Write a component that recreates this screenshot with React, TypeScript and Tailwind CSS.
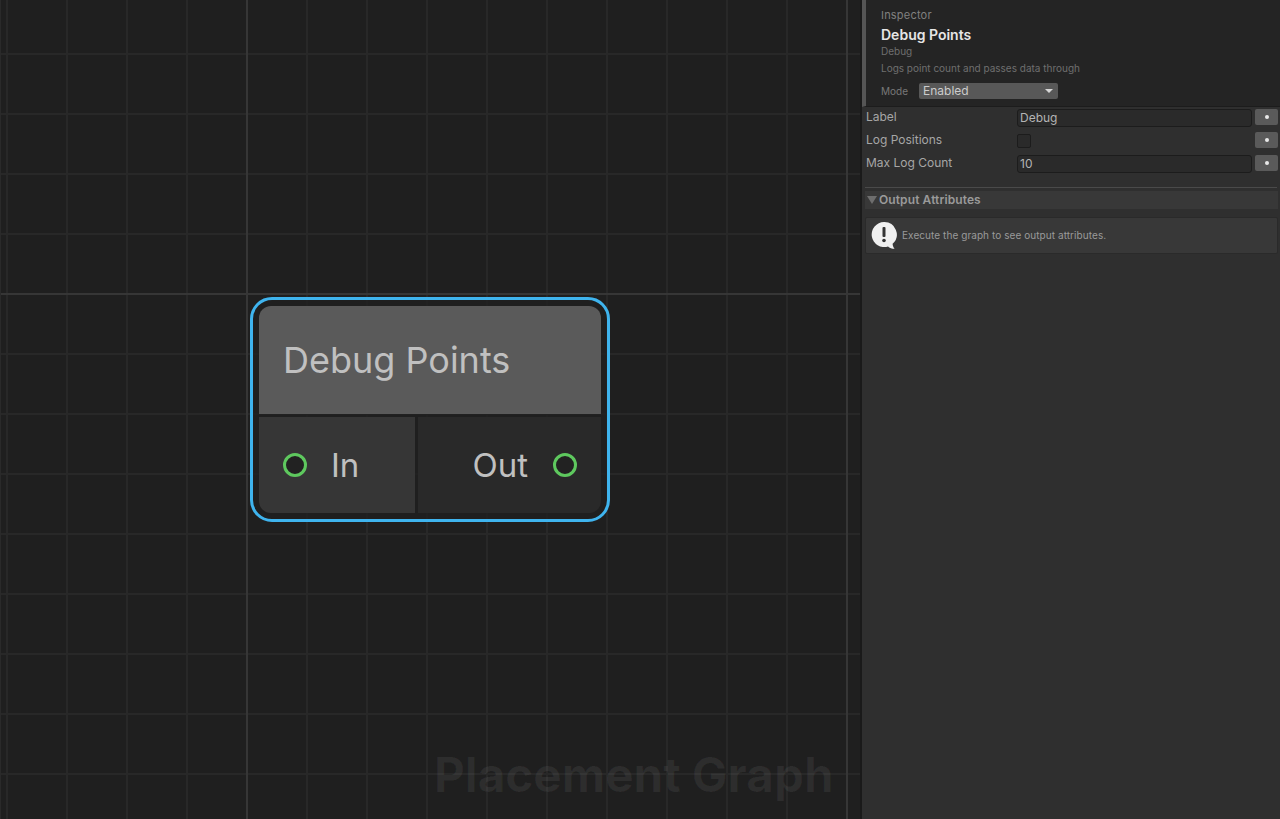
const font = { fontFamily: "Inter, 'Noto Sans', sans-serif" };

function Dot() {
  return (
    <button className="flex h-4 w-[23px] items-center justify-center rounded-[2px] bg-[#5a5a5a]">
      <span className="h-[4px] w-[4px] rounded-full bg-[#e8e8e8]" />
    </button>
  );
}

function Row({ label, children }: { label: string; children: React.ReactNode }) {
  return (
    <div className="flex h-[23px] items-center pl-1 pr-[2px]">
      <span className="w-[151px] pb-[2px] text-[12px] text-[#a6a6a6]">{label}</span>
      <div className="flex-1">{children}</div>
      <div className="ml-[3px] pb-px"><Dot /></div>
    </div>
  );
}

function Field({ value }: { value: string }) {
  return (
    <div className="flex h-[18px] w-[235px] items-center rounded-[3px] border border-[#1c1c1c] bg-[#2a2a2a] pl-[2px] text-[12px] text-[#b4b4b4]">
      {value}
    </div>
  );
}

function Port() {
  return <span className="h-6 w-6 shrink-0 rounded-full border-[3px] border-[#5ec85e] bg-[#222222]" />;
}

export default function App() {
  return (
    <div className="flex h-[819px] w-[1280px] overflow-hidden bg-[#1f1f1f]" style={font}>
      {/* Graph canvas */}
      <div className="relative h-full w-[860px] border-l border-[#2a2a2a] bg-[#1f1f1f] bg-[linear-gradient(to_right,#363636_2px,transparent_2px),linear-gradient(to_bottom,#363636_2px,transparent_2px),linear-gradient(to_right,#282828_2px,transparent_2px),linear-gradient(to_bottom,#282828_2px,transparent_2px)] bg-[length:600px_600px,600px_600px,60px_60px,60px_60px] bg-[position:245px_293px,245px_293px,5px_53px,5px_53px]">
        <div className="absolute left-[249px] top-[297px] h-[225px] w-[360px] rounded-[22px] border-[3px] border-[#3fb4ee] bg-[#1f1f1f]/80 p-[6px]">
          <div className="flex h-full flex-col overflow-hidden rounded-[12px]">
            <div className="flex h-[108px] items-center bg-[#5a5a5a] pl-6 text-[36px] text-[#c0c0c0]">Debug Points</div>
            <div className="mt-[3px] flex flex-1 text-[33px] text-[#c0c0c0]">
              <div className="flex w-[156px] items-center bg-[#383838]/95 pl-6">
                <Port />
                <span className="ml-6 pt-[2px]">In</span>
              </div>
              <div className="ml-[3px] flex flex-1 items-center justify-end bg-[#2a2a2a]/95 pr-6">
                <span className="mr-[25px] pt-[2px]">Out</span>
                <Port />
              </div>
            </div>
          </div>
        </div>
        <div className="absolute left-[433px] top-[745px] text-[47.6px] font-bold leading-[60px] text-white/[0.06]">Placement Graph</div>
      </div>

      {/* Inspector */}
      <div className="flex h-full w-[420px] flex-col border-l-2 border-[#1a1a1a] bg-[#2f2f2f]">
        <div className="h-[107px] border-b border-[#1c1c1c] border-l-4 border-l-[#555555] bg-[#242424] pl-[15px] pt-[9px]">
          <div className="text-[11px] leading-[13px] tracking-[0.2px] text-[#808080]">Inspector</div>
          <div className="mt-[4px] text-[14px] font-semibold leading-[17px] text-[#e6e6e6]">Debug Points</div>
          <div className="mt-[2px] text-[10px] leading-[13px] text-[#6f6f6f]">Debug</div>
          <div className="mt-[4px] text-[10px] leading-[13px] text-[#6f6f6f]">Logs point count and passes data through</div>
          <div className="mt-[8px] flex items-center">
            <span className="mt-px w-[38px] text-[10px] text-[#787878]">Mode</span>
            <div className="flex h-4 w-[139px] items-center justify-between rounded-[2px] bg-[#585858] pl-[4px] pr-[4px] text-[12px] text-[#cccccc]">
              Enabled
              <span className="mr-[1px] h-0 w-0 border-x-[4px] border-t-[4px] border-x-transparent border-t-[#d6d6d6]" />
            </div>
          </div>
        </div>
        <div className="-mt-px">
          <Row label="Label"><Field value="Debug" /></Row>
          <Row label="Log Positions"><div className="h-[14px] w-[14px] rounded-[2px] border border-[#1c1c1c] bg-[#2a2a2a]" /></Row>
          <Row label="Max Log Count"><Field value="10" /></Row>
        </div>
        <div className="mx-[3px] mt-[12px] h-px bg-[#4a4a4a]" />
        <div className="ml-[3px] mr-[2px] mt-[3px] flex h-[18px] items-center bg-[#383838] text-[12px] font-semibold tracking-[0.1px] text-[#9a9a9a]">
          <span className="ml-[2px] mr-[2px] h-0 w-0 border-x-[5px] border-t-[8px] border-x-transparent border-t-[#6e6e6e]" />
          Output Attributes
        </div>
        <div className="ml-[3px] mr-[2px] mt-[8px] flex h-[37px] items-center rounded-[2px] border border-[#2a2a2a] bg-[#383838] pl-[5px] text-[10px] tracking-[0.07px] text-[#9a9a9a]">
          <svg width="28" height="30" viewBox="0 0 28 30" className="mr-[3px] shrink-0">
            <path d="M13 1a12.5 12.5 0 1 0 4 24.4c1.5 1.6 4 2.3 6.6 2.4-1.2-1.4-1.9-3-2-5A12.5 12.5 0 0 0 13 1z" fill="#f0f0f0" />
            <rect x="11.5" y="6" width="3" height="10" rx="1" fill="#333333" />
            <circle cx="13" cy="19.5" r="1.8" fill="#333333" />
          </svg>
          Execute the graph to see output attributes.
        </div>
      </div>
    </div>
  );
}
